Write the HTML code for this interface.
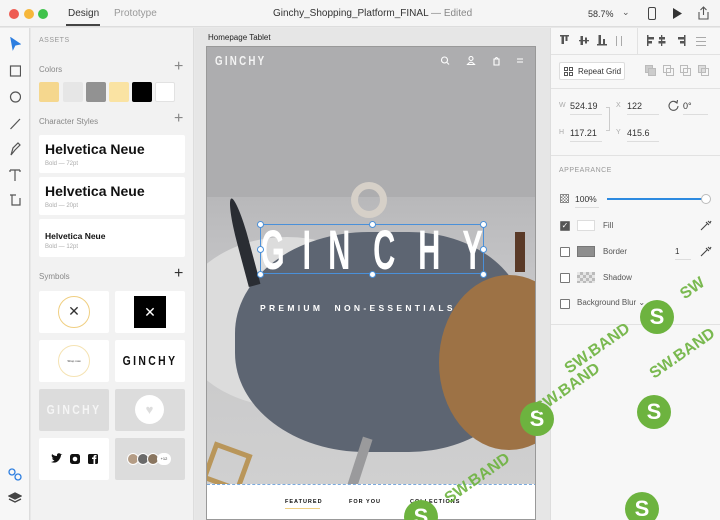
<!DOCTYPE html>
<html><head><meta charset="utf-8"><style>
*{margin:0;padding:0;box-sizing:border-box}
html,body{width:720px;height:520px;overflow:hidden}
body{font-family:"Liberation Sans",sans-serif;background:#e8e8e8;position:relative;color:#333}
.a{position:absolute}
.t{font-size:7px;color:#999;letter-spacing:.5px}
.card{position:absolute;background:#fff;border-radius:2px}
.sw{position:absolute;top:82px;width:20px;height:20px;border-radius:2px}
.lbl{font-size:8px;color:#888}
.plus{position:absolute;font-size:16px;color:#888;font-weight:300}
.inp{position:absolute;font-size:9px;color:#333;border-bottom:1px solid #ddd;padding-bottom:3px}
.cb{position:absolute;width:10px;height:10px;border:1px solid #777;border-radius:1px;background:#fff}
.h{position:absolute;width:7px;height:7px;border-radius:50%;background:#fff;border:1px solid #4a90d9}
.big{display:flex;justify-content:space-between;color:#fff;font-size:56px;font-weight:bold;line-height:50px}
.big span{display:inline-block;transform:scaleX(.55)}
.wm{position:absolute;font-size:16px;font-weight:bold;color:#6db33f;transform:rotate(-35deg);opacity:.9}
.ws{position:absolute;width:34px;height:34px;border-radius:50%;background:#6db33f;color:#fff;font-weight:bold;font-size:22px;text-align:center;line-height:34px}
</style></head><body>
<div class="a" style="left:0;top:0;width:720px;height:27px;background:#f5f5f5;border-bottom:1px solid #ddd"></div>
<div class="a" style="left:9px;top:9px;width:10px;height:10px;border-radius:50%;background:#ee5b52"></div>
<div class="a" style="left:24px;top:9px;width:10px;height:10px;border-radius:50%;background:#f6b73a"></div>
<div class="a" style="left:38px;top:9px;width:10px;height:10px;border-radius:50%;background:#3fc24b"></div>
<div class="a" style="left:68px;top:8px;font-size:10px;color:#333">Design</div>
<div class="a" style="left:66px;top:24px;width:34px;height:2px;background:#444"></div>
<div class="a" style="left:114px;top:8px;font-size:10px;color:#999">Prototype</div>
<div class="a" style="left:273px;top:8px;font-size:10px;color:#333">Ginchy_Shopping_Platform_FINAL <span style="color:#888">— Edited</span></div>
<div class="a" style="left:588px;top:9px;font-size:9px;color:#333">58.7%</div>
<div class="a" style="left:622px;top:7px;font-size:9px;color:#555">⌄</div>
<div class="a" style="left:648px;top:7px;width:8px;height:13px;border:1.3px solid #444;border-radius:2px"></div>
<svg class="a" style="left:672px;top:8px" width="10" height="11"><path d="M1 0L10 5.5L1 11Z" fill="#333"/></svg>
<svg class="a" style="left:697px;top:6px" width="13" height="14"><path d="M2 6V13H11V6M6.5 1V9M3.5 4L6.5 1L9.5 4" fill="none" stroke="#555" stroke-width="1.1"/></svg>
<div class="a" style="left:0;top:28px;width:30px;height:492px;background:#f7f7f7;border-right:1px solid #ddd"></div>
<svg class="a" style="left:9px;top:37px" width="12" height="180" fill="none" stroke="#555" stroke-width="1.2">
<path d="M2 1L11 7L6 8L4 12Z" fill="#2d7ee0" stroke="#2d7ee0"/>
<rect x="1.5" y="29" width="10" height="10"/>
<circle cx="6.5" cy="60" r="5"/>
<path d="M1.5 92L11 82"/>
<path d="M2 118L4 111L9 106L11 108L6 113Z"/>
<path d="M1 133H11M6 133V144M1 133V135M11 133V135" />
<path d="M3 158V168H11V161M1 158H7" />
<circle cx="5.5" cy="188" r="4"/><path d="M8.5 191L11.5 194"/>
</svg>
<svg class="a" style="left:8px;top:468px" width="14" height="40" fill="none" stroke-width="1.3">
<circle cx="4" cy="4" r="3" stroke="#2d7ee0"/><circle cx="10" cy="9" r="3" stroke="#2d7ee0"/>
<path d="M7 25L13 28L7 31L1 28Z" fill="#444" stroke="#444"/><path d="M1 31L7 34L13 31" stroke="#444"/>
</svg>
<div class="a" style="left:31px;top:28px;width:163px;height:492px;background:#f2f2f2;border-right:1px solid #ddd"></div>
<div class="a t" style="left:39px;top:37px">ASSETS</div>
<div class="a lbl" style="left:39px;top:65px">Colors</div>
<div class="plus" style="left:174px;top:58px">+</div>
<div class="sw" style="left:39px;background:#f5d78e"></div>
<div class="sw" style="left:63px;background:#e6e6e6"></div>
<div class="sw" style="left:86px;background:#929292"></div>
<div class="sw" style="left:109px;background:#fae3a3"></div>
<div class="sw" style="left:132px;background:#000"></div>
<div class="sw" style="left:155px;background:#fff;border:1px solid #e2e2e2"></div>
<div class="a lbl" style="left:39px;top:117px">Character Styles</div>
<div class="plus" style="left:174px;top:110px">+</div>
<div class="card" style="left:39px;top:135px;width:146px;height:38px"><div class="a" style="left:6px;top:6px;font-size:14px;font-weight:bold;color:#111">Helvetica Neue</div><div class="a" style="left:6px;top:26px;font-size:6px;color:#aaa">Bold — 72pt</div></div>
<div class="card" style="left:39px;top:177px;width:146px;height:38px"><div class="a" style="left:6px;top:6px;font-size:14px;font-weight:bold;color:#111">Helvetica Neue</div><div class="a" style="left:6px;top:26px;font-size:6px;color:#aaa">Bold — 20pt</div></div>
<div class="card" style="left:39px;top:219px;width:146px;height:38px"><div class="a" style="left:6px;top:12px;font-size:8.5px;font-weight:bold;color:#111">Helvetica Neue</div><div class="a" style="left:6px;top:25px;font-size:6px;color:#aaa">Bold — 12pt</div></div>
<div class="a lbl" style="left:39px;top:272px">Symbols</div>
<div class="plus" style="left:174px;top:265px;color:#333">+</div>
<div class="card" style="left:39px;top:291px;width:70px;height:42px"><div class="a" style="left:19px;top:5px;width:32px;height:32px;border-radius:50%;border:1.5px solid #f0cf82;text-align:center;line-height:29px;font-size:14px">✕</div></div>
<div class="card" style="left:115px;top:291px;width:70px;height:42px"><div class="a" style="left:19px;top:5px;width:32px;height:32px;background:#000;color:#fff;text-align:center;line-height:32px;font-size:14px">✕</div></div>
<div class="card" style="left:39px;top:340px;width:70px;height:42px"><div class="a" style="left:19px;top:5px;width:32px;height:32px;border-radius:50%;border:1px solid #f5e3b3;text-align:center;line-height:31px;font-size:3px">Shop now</div></div>
<div class="card" style="left:115px;top:340px;width:70px;height:42px"><div class="a" style="left:0;width:70px;top:13px;text-align:center;font-size:13px;font-weight:bold;letter-spacing:3px;color:#111;transform:scaleX(.8)">GINCHY</div></div>
<div class="card" style="left:39px;top:389px;width:70px;height:42px;background:#dcdcdc"><div class="a" style="left:0;width:70px;top:13px;text-align:center;font-size:13px;font-weight:bold;letter-spacing:3px;color:#f5f5f5;transform:scaleX(.8)">GINCHY</div></div>
<div class="card" style="left:115px;top:389px;width:70px;height:42px;background:#dcdcdc"><div class="a" style="left:20px;top:6px;width:29px;height:29px;border-radius:50%;background:#fff;text-align:center;line-height:29px;font-size:13px;color:#ddd">♥</div></div>
<div class="card" style="left:39px;top:438px;width:70px;height:42px">
<svg class="a" style="left:12px;top:15px" width="48" height="12" fill="#111"><path d="M0 9Q5 11 8 7Q10 4 10 2L11.5 1L10 1.2Q9 0 7.5 0.3Q5.5 1 6 3Q3 3 1 1Q0 4 2.5 5.5L1 5.3Q1.5 7 3.5 7.5Q2 8.7 0 9Z"/><rect x="19" y="1" width="10" height="10" rx="2.5"/><circle cx="24" cy="6" r="2.3" fill="#fff"/><rect x="37" y="1" width="10" height="10" rx="1.5"/><path d="M42.5 11V6H41V4.5H42.5V3.5Q42.5 2 44.5 2H45.5V3.5H44.6Q44.2 3.5 44.2 4V4.5H45.5L45.3 6H44.2V11Z" fill="#fff"/></svg></div>
<div class="card" style="left:115px;top:438px;width:70px;height:42px;background:#dcdcdc">
<div class="a" style="left:12px;top:15px;width:12px;height:12px;border-radius:50%;background:#b49c85;border:1px solid #fff"></div>
<div class="a" style="left:22px;top:15px;width:12px;height:12px;border-radius:50%;background:#6a6a6a;border:1px solid #fff"></div>
<div class="a" style="left:32px;top:15px;width:12px;height:12px;border-radius:50%;background:#8a7660;border:1px solid #fff"></div>
<div class="a" style="left:42px;top:15px;width:14px;height:12px;border-radius:6px;background:#fff;font-size:4px;line-height:12px;text-align:center">+12</div></div>
<div class="a" style="left:195px;top:28px;width:355px;height:492px;background:#e6e6e6"></div>
<div class="a" style="left:208px;top:33px;font-size:8px;color:#222">Homepage Tablet</div>
<div class="a" style="left:206px;top:46px;width:330px;height:474px;overflow:hidden;background:#adadaf;border:1px solid #999">
 <div class="a" style="left:0;top:150px;width:330px;height:290px;background:linear-gradient(180deg,#b8b8ba 0,#c6c6c8 30%,#d0d0d0 100%)"></div>
 <div class="a" style="left:-30px;top:190px;width:220px;height:170px;border-radius:50%;background:#dcdcdc"></div>
 <div class="a" style="left:28px;top:185px;width:290px;height:220px;border-radius:46% 40% 40% 45%;background:#5d6572"></div>
 <div class="a" style="left:30px;top:150px;width:12px;height:90px;border-radius:50% 50% 0 0;background:#2a2d33;transform:rotate(-15deg)"></div>
 <div class="a" style="left:144px;top:135px;width:36px;height:36px;border-radius:50%;border:7px solid #d6d0c8"></div>
 <div class="a" style="left:232px;top:228px;width:140px;height:175px;border-radius:50%;background:#9d7245"></div>
 <div class="a" style="left:308px;top:185px;width:10px;height:40px;background:#5a3a28"></div>
 <div class="a" style="left:148px;top:390px;width:10px;height:50px;background:#9a9a9c;transform:rotate(18deg)"></div>
 <div class="a" style="left:0;top:400px;width:40px;height:40px;border:5px solid #b9965a;transform:rotate(20deg)"></div>
 <div class="a" style="left:8px;top:6px;font-size:13px;font-weight:bold;letter-spacing:3px;color:#f4f4f4;transform:scaleX(.75);transform-origin:left">GINCHY</div>
 <svg class="a" style="left:233px;top:8px" width="90" height="12" fill="none" stroke="#fff" stroke-width="1.1"><circle cx="4.5" cy="5" r="3"/><path d="M7 7.5L9 9.5"/><circle cx="31" cy="3.5" r="2"/><path d="M27.5 9.5Q31 5 34.5 9.5Z"/><path d="M54 4H59V10H54ZM55 4Q56.5 1 58 4"/><path d="M77 4H83M77 7H83"/></svg>
 <div class="a big" style="left:44px;top:178px;width:240px;height:50px"><span>G</span><span>I</span><span>N</span><span>C</span><span>H</span><span>Y</span></div>
 <div class="a" style="left:53px;top:177px;width:224px;height:50px;border:1px solid #4a90d9"></div>
 <div class="h" style="left:50px;top:174px"></div><div class="h" style="left:162px;top:174px"></div><div class="h" style="left:273px;top:174px"></div>
 <div class="h" style="left:50px;top:199px"></div><div class="h" style="left:273px;top:199px"></div>
 <div class="h" style="left:50px;top:224px"></div><div class="h" style="left:162px;top:224px"></div><div class="h" style="left:273px;top:224px"></div>
 <div class="a" style="left:53px;top:256px;font-size:8.5px;font-weight:bold;letter-spacing:3.3px;color:#fff;white-space:nowrap">PREMIUM &nbsp;NON-ESSENTIALS</div>
 <div class="a" style="left:0;top:437px;width:330px;height:40px;background:#fff;border-top:1px dashed #7aa9dd"></div>
 <div class="a" style="left:78px;top:452px;font-size:5.5px;font-weight:bold;letter-spacing:1px;color:#111">FEATURED</div>
 <div class="a" style="left:78px;top:461px;width:35px;height:1px;background:#f0cf82"></div>
 <div class="a" style="left:142px;top:452px;font-size:5.5px;font-weight:bold;letter-spacing:1px;color:#111">FOR YOU</div>
 <div class="a" style="left:203px;top:452px;font-size:5.5px;font-weight:bold;letter-spacing:1px;color:#111">COLLECTIONS</div>
</div>
<div class="a" style="left:550px;top:28px;width:170px;height:492px;background:#f7f7f7;border-left:1px solid #ddd"></div>
<div class="a" style="left:551px;top:54px;width:169px;height:1px;background:#e2e2e2"></div>
<div class="a" style="left:551px;top:88px;width:169px;height:1px;background:#e2e2e2"></div>
<div class="a" style="left:551px;top:155px;width:169px;height:1px;background:#e2e2e2"></div>
<div class="a" style="left:551px;top:324px;width:169px;height:1px;background:#e2e2e2"></div>
<div class="a" style="left:637px;top:28px;width:1px;height:26px;background:#e2e2e2"></div>
<svg class="a" style="left:560px;top:34px" width="155" height="14" fill="#555">
<rect x="0" y="1" width="9" height="1.5"/><rect x="1.5" y="2" width="2.5" height="8"/><rect x="5.5" y="2" width="2" height="5"/>
<rect x="19" y="6" width="10" height="1.3"/><rect x="20.5" y="2" width="2.5" height="9"/><rect x="25" y="3.5" width="2" height="6"/>
<rect x="37" y="10" width="10" height="1.5"/><rect x="38.5" y="1" width="2.5" height="9"/><rect x="43" y="5" width="2" height="5"/>
<rect x="56" y="2" width="1" height="10" fill="#aaa"/><rect x="61" y="2" width="1" height="10" fill="#aaa"/>
<rect x="87" y="1" width="1.5" height="11"/><rect x="88" y="3" width="6" height="2.5"/><rect x="88" y="7" width="4" height="2.5"/>
<rect x="101" y="1" width="1.3" height="11"/><rect x="99" y="3" width="6" height="2.5"/><rect x="98.5" y="7" width="7" height="2.5"/>
<rect x="124" y="1" width="1.5" height="11"/><rect x="118" y="3" width="6" height="2.5"/><rect x="120" y="7" width="4" height="2.5"/>
<rect x="136" y="3" width="10" height="1" fill="#aaa"/><rect x="136" y="7" width="10" height="1" fill="#aaa"/><rect x="136" y="11" width="10" height="1" fill="#aaa"/>
</svg>
<div class="a" style="left:559px;top:62px;width:66px;height:18px;background:#fff;border:1px solid #ddd;border-radius:2px"></div>
<svg class="a" style="left:564px;top:67px" width="9" height="9" fill="none" stroke="#555"><rect x=".5" y=".5" width="3" height="3"/><rect x="5.5" y=".5" width="3" height="3"/><rect x=".5" y="5.5" width="3" height="3"/><rect x="5.5" y="5.5" width="3" height="3"/></svg>
<div class="a" style="left:578px;top:67px;font-size:8px;color:#333">Repeat Grid</div>
<svg class="a" style="left:645px;top:65px" width="70" height="12" fill="none" stroke="#bbb"><rect x=".5" y=".5" width="7" height="7" fill="#ccc"/><rect x="3.5" y="3.5" width="7" height="7" fill="#ccc"/><rect x="18.5" y=".5" width="7" height="7"/><rect x="21.5" y="3.5" width="7" height="7"/><rect x="35.5" y=".5" width="7" height="7"/><rect x="38.5" y="3.5" width="7" height="7"/><rect x="53.5" y=".5" width="7" height="7" fill="#ddd"/><rect x="56.5" y="3.5" width="7" height="7"/></svg>
<div class="a" style="left:559px;top:102px;font-size:7px;color:#aaa">W</div>
<div class="inp" style="left:570px;top:101px;width:32px">524.19</div>
<div class="a" style="left:616px;top:102px;font-size:7px;color:#aaa">X</div>
<div class="inp" style="left:627px;top:101px;width:32px">122</div>
<svg class="a" style="left:668px;top:100px" width="11" height="11" fill="none" stroke="#555" stroke-width="1.1"><path d="M9 3A4.5 4.5 0 1 0 10 6"/><path d="M6.5 1.5L9 3L9.5 0"/></svg>
<div class="inp" style="left:683px;top:101px;width:25px">0°</div>
<div class="a" style="left:606px;top:107px;width:4px;height:24px;border:1px solid #ccc;border-left:none"></div>
<div class="a" style="left:559px;top:129px;font-size:7px;color:#aaa">H</div>
<div class="inp" style="left:570px;top:128px;width:32px">117.21</div>
<div class="a" style="left:616px;top:129px;font-size:7px;color:#aaa">Y</div>
<div class="inp" style="left:627px;top:128px;width:32px">415.6</div>
<div class="a t" style="left:559px;top:167px">APPEARANCE</div>
<div class="a" style="left:560px;top:194px;width:9px;height:9px;background:repeating-conic-gradient(#888 0 25%,#fff 0 50%) 0 0/3px 3px;border:1px solid #888"></div>
<div class="inp" style="left:575px;top:194px;width:24px;font-size:8.5px">100%</div>
<div class="a" style="left:607px;top:198px;width:97px;height:2px;background:#2d8ae0"></div>
<div class="a" style="left:701px;top:194px;width:10px;height:10px;border-radius:50%;background:#fff;border:1px solid #bbb"></div>
<div class="cb" style="left:560px;top:221px;background:#555;color:#fff;font-size:8px;line-height:8px;text-align:center">✓</div>
<div class="a" style="left:577px;top:220px;width:18px;height:11px;background:#fff;border:1px solid #ddd"></div>
<div class="a" style="left:603px;top:221px;font-size:8px;color:#555">Fill</div>
<div class="cb" style="left:560px;top:247px"></div>
<div class="a" style="left:577px;top:246px;width:18px;height:11px;background:#8e8e8e;border:1px solid #777"></div>
<div class="a" style="left:603px;top:247px;font-size:8px;color:#555">Border</div>
<div class="inp" style="left:675px;top:247px;width:16px;font-size:8px">1</div>
<svg class="a" style="left:700px;top:219px" width="12" height="40" fill="none" stroke="#444" stroke-width="1.1"><path d="M1 11L7 5M6 3L9 6M8 2L10 4L11 2" /><path d="M1 37L7 31M6 29L9 32M8 28L10 30L11 28"/></svg>
<div class="cb" style="left:560px;top:273px"></div>
<div class="a" style="left:577px;top:272px;width:18px;height:11px;background:repeating-conic-gradient(#bbb 0 25%,#e5e5e5 0 50%) 0 0/6px 6px"></div>
<div class="a" style="left:603px;top:273px;font-size:8px;color:#555">Shadow</div>
<div class="cb" style="left:560px;top:299px"></div>
<div class="a" style="left:577px;top:298px;font-size:8px;color:#555">Background Blur ⌄</div>
<div class="ws" style="left:640px;top:300px">S</div>
<div class="ws" style="left:520px;top:402px">S</div>
<div class="ws" style="left:637px;top:395px">S</div>
<div class="ws" style="left:404px;top:500px">S</div>
<div class="ws" style="left:625px;top:492px">S</div>
<div class="wm" style="left:560px;top:340px">SW.BAND</div>
<div class="wm" style="left:645px;top:345px">SW.BAND</div>
<div class="wm" style="left:530px;top:380px">SW.BAND</div>
<div class="wm" style="left:440px;top:470px">SW.BAND</div>
<div class="wm" style="left:680px;top:280px">SW</div>
</body></html>
